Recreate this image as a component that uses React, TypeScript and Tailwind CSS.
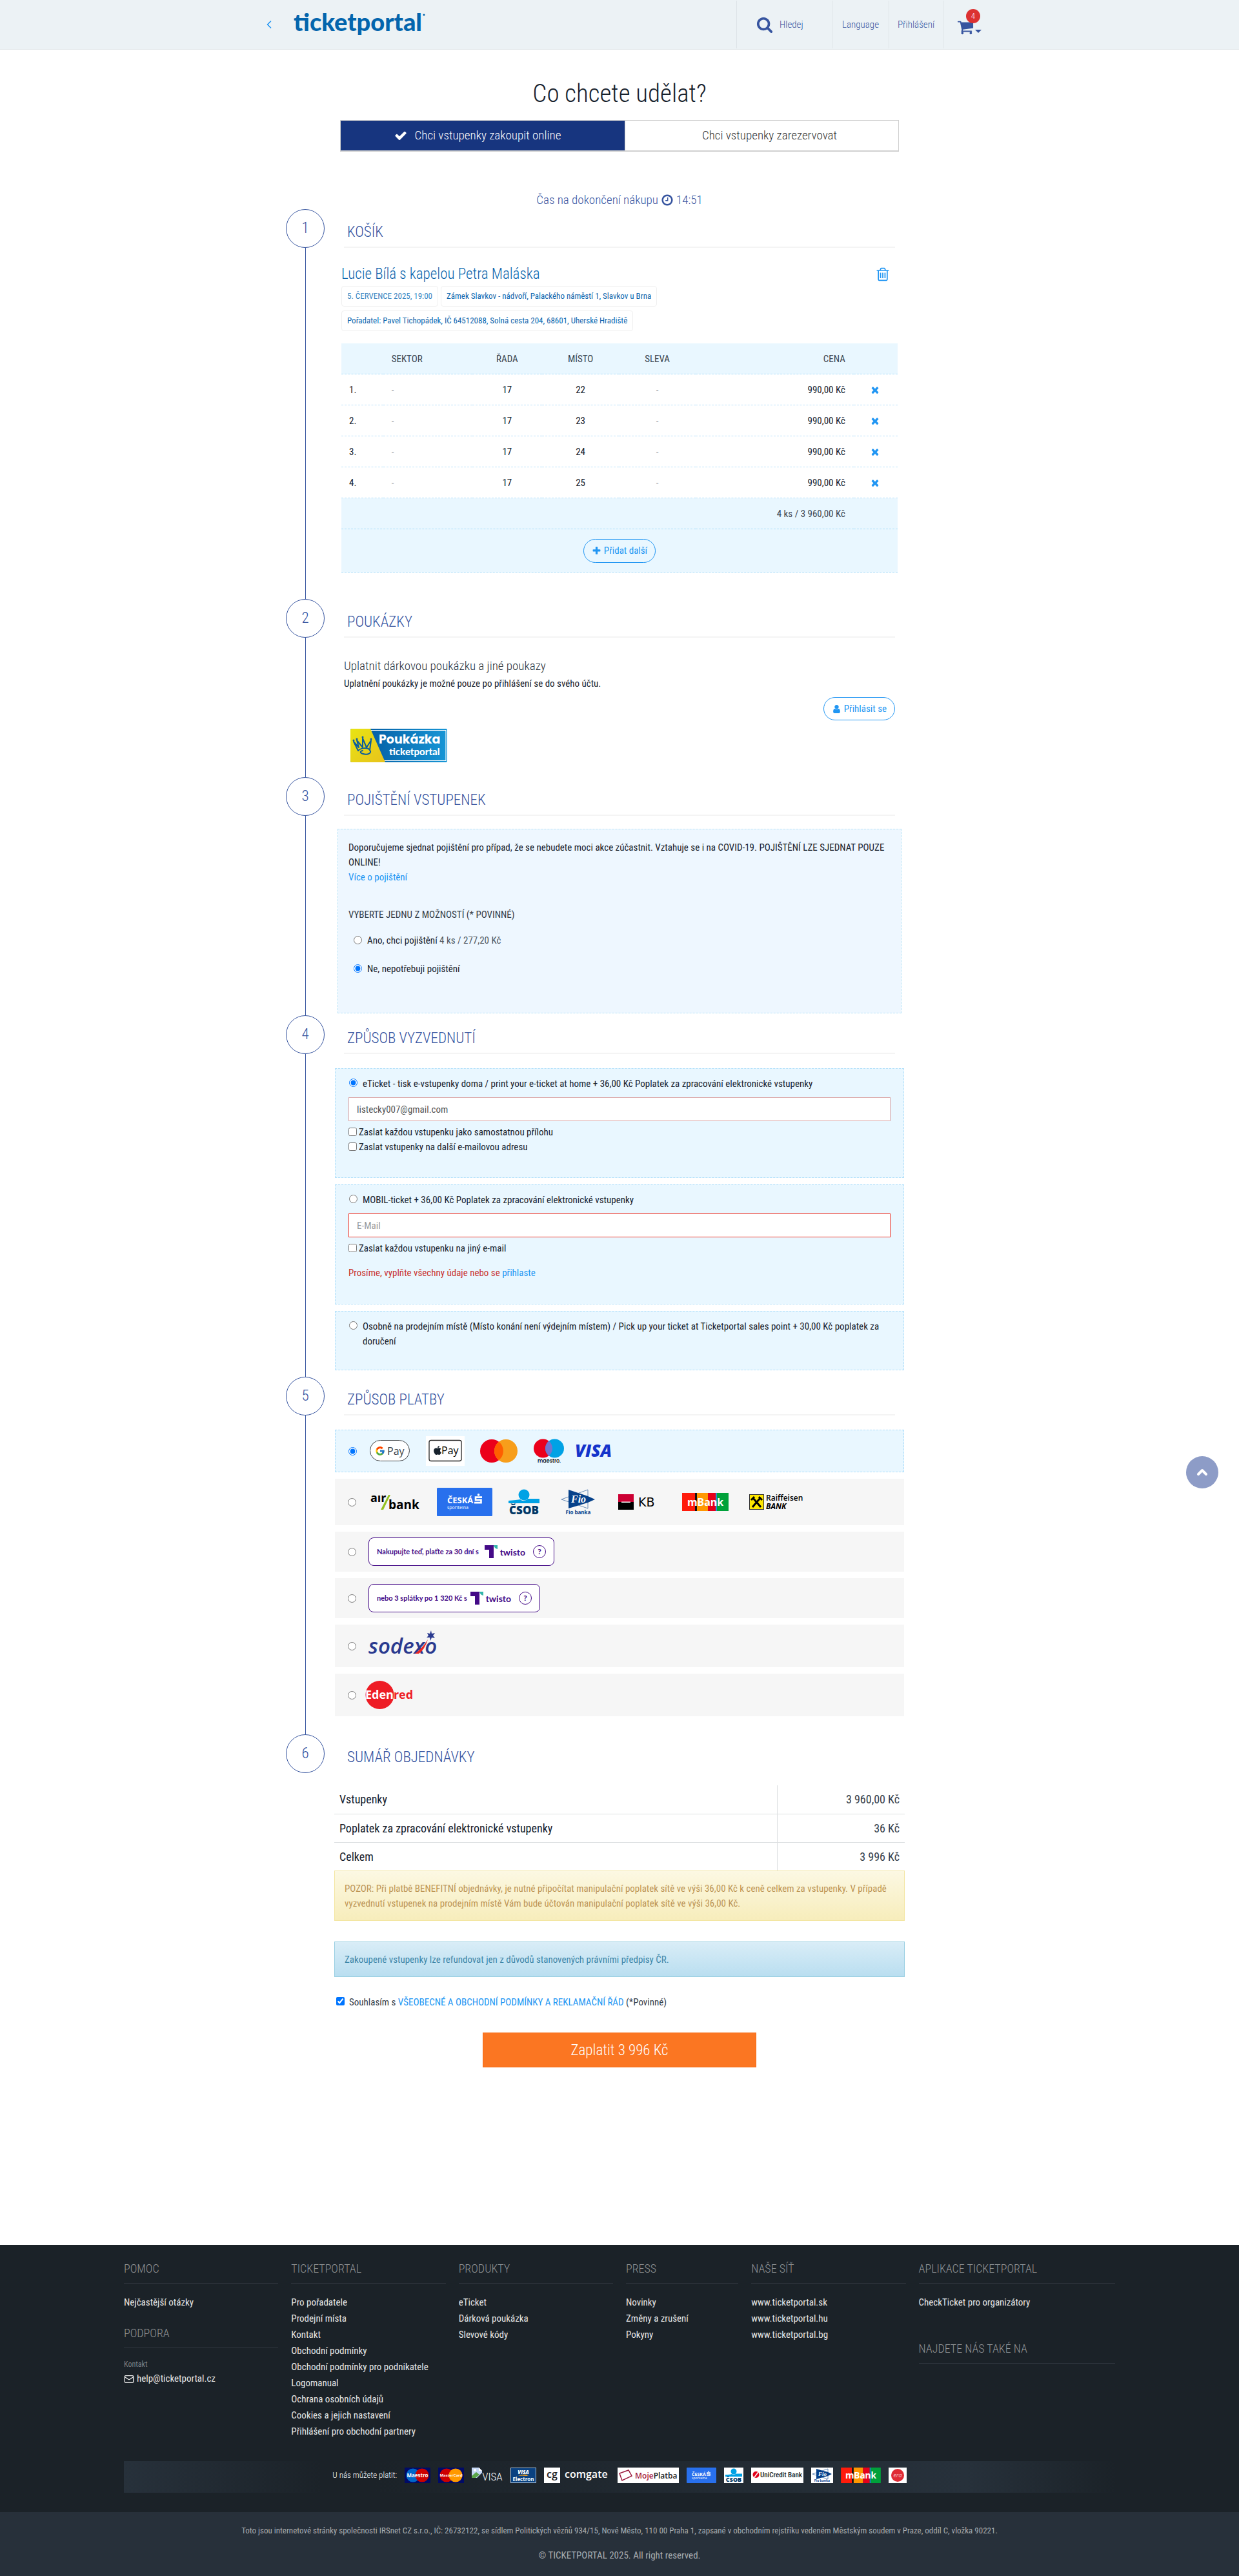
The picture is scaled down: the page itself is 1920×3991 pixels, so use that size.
import type { ReactNode } from "react";
import { FcGoogle } from "react-icons/fc";
import { FaApple } from "react-icons/fa";
import { ChevronLeft, ChevronUp, Mail } from "lucide-react";

const GLYPHS = {
  search:
    "M1216 832q0-185-131.5-316.5t-316.5-131.5-316.5 131.5-131.5 316.5 131.5 316.5 316.5 131.5 316.5-131.5 131.5-316.5zm512 832q0 52-38 90t-90 38q-54 0-90-38l-343-342q-179 124-399 124-143 0-273.5-55.5t-225-150-150-225-55.5-273.5 55.5-273.5 150-225 225-150 273.5-55.5 273.5 55.5 225 150 150 225 55.5 273.5q0 220-124 399l343 343q37 37 37 90z",
  check:
    "M1671 566q0 40-28 68l-724 724-136 136q-28 28-68 28t-68-28l-136-136-362-362q-28-28-28-68t28-68l136-136q28-28 68-28t68 28l294 295 656-657q28-28 68-28t68 28l136 136q28 28 28 68z",
  times:
    "M1490 1322q0 40-28 68l-136 136q-28 28-68 28t-68-28l-294-294-294 294q-28 28-68 28t-68-28l-136-136q-28-28-28-68t28-68l294-294-294-294q-28-28-28-68t28-68l136-136q28-28 68-28t68 28l294 294 294-294q28-28 68-28t68 28l136 136q28 28 28 68t-28 68l-294 294 294 294q28 28 28 68z",
  plus: "M1600 736v192q0 40-28 68t-68 28h-416v416q0 40-28 68t-68 28h-192q-40 0-68-28t-28-68v-416h-416q-40 0-68-28t-28-68v-192q0-40 28-68t68-28h416v-416q0-40 28-68t68-28h192q40 0 68 28t28 68v416h416q40 0 68 28t28 68z",
  cart: "M704 1536q0 52-38 90t-90 38-90-38-38-90 38-90 90-38 90 38 38 90zm896 0q0 52-38 90t-90 38-90-38-38-90 38-90 90-38 90 38 38 90zm128-1088v512q0 24-16.5 42.5t-40.5 21.5l-1044 122q13 60 13 70 0 16-24 64h920q26 0 45 19t19 45-19 45-45 19h-1024q-26 0-45-19t-19-45q0-11 8-31.5t16-36 21.5-40 15.5-29.5l-177-823h-204q-26 0-45-19t-19-45 19-45 45-19h256q16 0 28.5 6.5t19.5 15.5 13 24.5 8 26 5.5 29.5 4.5 26h1201q26 0 45 19t19 45z",
  clock:
    "M1024 544v448q0 14-9 23t-23 9h-320q-14 0-23-9t-9-23v-64q0-14 9-23t23-9h224v-352q0-14 9-23t23-9h64q14 0 23 9t9 23zm416 352q0-148-73-273t-198-198-273-73-273 73-198 198-73 273 73 273 198 198 273 73 273-73 198-198 73-273zm224 0q0 209-103 385.5t-279.5 279.5-385.5 103-385.5-103-279.5-279.5-103-385.5 103-385.5 279.5-279.5 385.5-103 385.5 103 279.5 279.5 103 385.5z",
  trash:
    "M704 736v576q0 14-9 23t-23 9h-64q-14 0-23-9t-9-23v-576q0-14 9-23t23-9h64q14 0 23 9t9 23zm256 0v576q0 14-9 23t-23 9h-64q-14 0-23-9t-9-23v-576q0-14 9-23t23-9h64q14 0 23 9t9 23zm256 0v576q0 14-9 23t-23 9h-64q-14 0-23-9t-9-23v-576q0-14 9-23t23-9h64q14 0 23 9t9 23zm128 724v-948h-896v948q0 22 7 40.5t14.5 27 10.5 8.5h832q3 0 10.5-8.5t14.5-27 7-40.5zm-672-1076h448l-48-117q-7-9-17-11h-317q-10 2-17 11zm928 32v64q0 14-9 23t-23 9h-96v948q0 83-47 143.5t-113 60.5h-832q-66 0-113-58.5t-47-141.5v-952h-96q-14 0-23-9t-9-23v-64q0-14 9-23t23-9h309l70-167q15-37 54-63t79-26h320q40 0 79 26t54 63l70 167h309q14 0 23 9t9 23z",
  user: "M1536 1399q0 109-62.5 187t-150.5 78h-854q-88 0-150.5-78t-62.5-187q0-85 8.5-160.5t31.5-152 58.5-131 94-89 134.5-34.5q131 128 313 128t313-128q76 0 134.5 34.5t94 89 58.5 131 31.5 152 8.5 160.5zm-256-887q0 159-112.5 271.5t-271.5 112.5-271.5-112.5-112.5-271.5 112.5-271.5 271.5-112.5 271.5 112.5 112.5 271.5z",
};

function Glyph({ name, className }: { name: keyof typeof GLYPHS; className: string }) {
  return (
    <svg viewBox="0 0 1792 1792" fill="currentColor" className={className} aria-hidden="true">
      <path d={GLYPHS[name]} />
    </svg>
  );
}

function Brand() {
  return (
    <svg viewBox="0 0 206 46" className="h-[46px] w-[206px]">
      <text x="0" y="33" className="fill-[#0365ad] font-['Lato'] text-[38px] font-black">
        ticketportal
      </text>
      <circle cx="202" cy="8" r="1.5" fill="#0365ad" />
    </svg>
  );
}

function Header() {
  return (
    <header className="border-b border-[#e2e7ea] bg-[#ecf2f5] text-[15px] text-[#36549f]">
      <div className="mx-auto flex h-[76px] max-w-[1122px] items-center">
        <a href="#zpet" aria-label="Zpět" className="ml-2 text-[#2196f3]">
          <ChevronLeft className="size-5" strokeWidth={2} />
        </a>
        <a href="#domu" aria-label="Ticketportal" className="ml-7">
          <Brand />
        </a>
        <nav className="ml-auto flex h-[74px] items-stretch">
          <button type="button" className="flex w-[148px] items-center gap-[10px] border-l border-[#dde3e7] pl-[30px]">
            <Glyph name="search" className="size-[26px]" />
            Hledej
          </button>
          <a href="#jazyk" className="flex w-[88px] items-center justify-center border-l border-[#dde3e7]">
            Language
          </a>
          <a href="#prihlaseni" className="flex w-[84px] items-center justify-center border-l border-[#dde3e7]">
            Přihlášení
          </a>
          <a href="#kosik" aria-label="Košík, 4 vstupenky" className="relative flex w-[60px] items-center gap-[2px] border-l border-[#dde3e7] pl-[21px]">
            <Glyph name="cart" className="mt-2 size-[26px]" />
            <span className="mt-5 border-x-[5px] border-t-[5px] border-x-transparent border-t-[#36549f]" />
            <span className="absolute top-[13px] left-[35px] flex size-[22px] items-center justify-center rounded-full bg-[#dc3131] text-[13px] text-white">
              4
            </span>
          </a>
        </nav>
      </div>
    </header>
  );
}

function Step({ n, title, ruled = true, last = false, children }: { n: number; title: string; ruled?: boolean; last?: boolean; children: ReactNode }) {
  return (
    <section className="flex gap-[15px]">
      <div className="flex w-[60px] shrink-0 flex-col items-center">
        <span className="flex size-[60px] shrink-0 items-center justify-center rounded-full border border-[#36549f] text-[23px] text-[#36549f]">
          {n}
        </span>
        {!last && <span className="w-px flex-1 bg-[#36549f]" />}
      </div>
      <div className="min-w-0 flex-1 pt-[22px]">
        <h2 className={`mx-[15px] px-[5px] text-[23px] leading-7 text-[#36549f] uppercase ${ruled ? "border-b-2 border-[#f4f4f4] pb-2" : ""}`}>
          {title}
        </h2>
        {children}
      </div>
    </section>
  );
}

const SEATS = ["22", "23", "24", "25"];
const TAG = "flex h-8 items-center rounded-sm border border-[#f0f0f0] px-2";

function Basket() {
  return (
    <Step n={1} title="Košík">
      <div className="mx-[11px] pb-[41px]">
        <div className="mt-[27px] flex items-center justify-between pr-[11px]">
          <h3 className="text-[23px] leading-7 text-[#0b66ae]">
            <a href="#akce">Lucie Bílá s kapelou Petra Maláska</a>
          </h3>
          <button type="button" aria-label="Vyprázdnit košík" className="text-[#2196f3]">
            <Glyph name="trash" className="size-6" />
          </button>
        </div>
        <div className="mt-1 flex gap-1 text-[13px] font-normal text-[#0b66ae]">
          <span className={`${TAG} text-[#3a86c2]`}>5. ČERVENCE 2025, 19:00</span>
          <span className={TAG}>Zámek Slavkov - nádvoří, Palackého náměstí 1, Slavkov u Brna</span>
        </div>
        <div className="mt-[6px] flex text-[13px] font-normal text-[#0b66ae]">
          <span className={TAG}>Pořadatel: Pavel Tichopádek, IČ 64512088, Solná cesta 204, 68601, Uherské Hradiště</span>
        </div>
        <table className="mt-[19px] w-full table-fixed border-separate border-spacing-0 text-center text-[15px] leading-5 text-[#17222d] [&_td]:border-b [&_td]:border-dashed [&_th]:border-b [&_th]:border-dashed">
          <colgroup>
            <col className="w-[7.5%]" />
            <col className="w-[16%]" />
            <col className="w-[12.6%]" />
            <col className="w-[13.8%]" />
            <col className="w-[13.8%]" />
            <col className="w-[28.4%]" />
            <col />
          </colgroup>
          <thead className="[&_th]:border-[#a9dcfa]">
            <tr className="h-12 bg-[#e9f7ff] text-[#3c4650]">
              <th aria-label="Pořadí" />
              <th className="pl-[13px] text-left font-normal">SEKTOR</th>
              <th className="font-normal">ŘADA</th>
              <th className="font-normal">MÍSTO</th>
              <th className="font-normal">SLEVA</th>
              <th className="pr-[13px] text-right font-normal">CENA</th>
              <th aria-label="Odebrat" />
            </tr>
          </thead>
          <tbody className="font-normal [&_td]:border-[#b8e1fa]">
            {SEATS.map((seat, i) => (
              <tr key={seat} className="h-12">
                <td className="pl-3 text-left">{i + 1}.</td>
                <td className="pl-[13px] text-left text-[#8a9096]">-</td>
                <td>17</td>
                <td>{seat}</td>
                <td className="text-[#8a9096]">-</td>
                <td className="pr-[13px] text-right">990,00 Kč</td>
                <td>
                  <button type="button" aria-label={`Odebrat místo ${seat}`} className="block pl-[25px] text-[#2196f3]">
                    <Glyph name="times" className="size-4" />
                  </button>
                </td>
              </tr>
            ))}
          </tbody>
          <tfoot className="bg-[#e9f7ff] font-normal text-[#3c4650] [&_td]:border-[#a9dcfa]">
            <tr className="h-12">
              <td colSpan={5} />
              <td className="pr-[13px] text-right">4 ks / 3 960,00 Kč</td>
              <td />
            </tr>
            <tr className="h-[67px]">
              <td colSpan={7}>
                <button type="button" className="inline-flex h-[37px] items-center gap-1 rounded-full border border-[#2196f3] px-3 text-[#2196f3]">
                  <Glyph name="plus" className="size-[15px]" />
                  Přidat další
                </button>
              </td>
            </tr>
          </tfoot>
        </table>
      </div>
    </Step>
  );
}

function VoucherLogo() {
  return (
    <svg viewBox="0 0 150 52" className="h-[52px] w-[150px]" role="img" aria-label="Poukázka ticketportal">
      <defs>
        <linearGradient id="voucherBlue" x1="0" x2="1">
          <stop offset="0.2" stopColor="#0560a6" />
          <stop offset="1" stopColor="#1796d6" />
        </linearGradient>
        <linearGradient id="voucherGold" x1="0" y1="0" x2="1" y2="1">
          <stop offset="0" stopColor="#e8e413" />
          <stop offset="1" stopColor="#e8c31c" />
        </linearGradient>
      </defs>
      <rect width="150" height="52" rx="2" fill="url(#voucherBlue)" />
      <path d="M30 2.500H148V49.500H52" fill="none" stroke="#fff" strokeWidth="1.2" />
      <path d="M2 0H31L54 52H2Q0 52 0 50V2Q0 0 2 0Z" fill="url(#voucherGold)" />
      <g fill="none" stroke="#0a5c9c" strokeWidth="2" strokeLinejoin="round" strokeLinecap="round">
        <path d="M5 20L12 34M5 20L13 29L10 18L19 29L19 15L25 29L32 18L30 33" />
        <path d="M12 34C17 29 27 29 30 33C34 38 26 41 20 39C15 38 14 35 19 34" />
      </g>
      <g fill="#0a5c9c">
        <circle cx="5" cy="18" r="1.5" />
        <circle cx="10" cy="16" r="1.5" />
        <circle cx="19" cy="13" r="1.5" />
        <circle cx="32" cy="16" r="1.5" />
      </g>
      <text x="44" y="23" className="fill-white font-['Poppins'] text-[19px] font-bold">Poukázka</text>
      <text x="60" y="41" className="fill-white font-['Lato'] text-[15px] font-black">ticketportal</text>
    </svg>
  );
}

function Vouchers() {
  return (
    <Step n={2} title="Poukázky">
      <div className="mx-[15px] pb-[23px] text-[#17222d]">
        <h3 className="mt-8 text-[19px] leading-6 text-[#26303a]">Uplatnit dárkovou poukázku a jiné poukazy</h3>
        <p className="mt-[5px] text-[15px] leading-5 font-normal">Uplatnění poukázky je možné pouze po přihlášení se do svého účtu.</p>
        <div className="mt-[11px] flex justify-end">
          <button type="button" className="flex h-9 items-center gap-1 rounded-full border border-[#2196f3] px-3 text-[15px] font-normal text-[#2196f3]">
            <Glyph name="user" className="size-[15px]" />
            Přihlásit se
          </button>
        </div>
        <div className="mt-[13px] ml-[10px]">
          <VoucherLogo />
        </div>
      </div>
    </Step>
  );
}

function Insurance() {
  return (
    <Step n={3} title="Pojištění vstupenek">
      <div className="pb-[3px]">
        <div className="mx-[5px] mt-5 border border-dashed border-[#b5e2f7] bg-[#eef7ff] px-4 pt-[17px] pb-14 text-[15px] leading-[23px] font-normal text-[#17222d]">
          <p>
            Doporučujeme sjednat pojištění pro případ, že se nebudete moci akce zúčastnit. Vztahuje se i na COVID-19. POJIŠTĚNÍ LZE
            SJEDNAT POUZE ONLINE!
          </p>
          <a href="#pojisteni" className="text-[#2196f3]">
            Více o pojištění
          </a>
          <p className="mt-[35px] text-[#36404a]">VYBERTE JEDNU Z MOŽNOSTÍ (* POVINNÉ)</p>
          <label className="mt-[17px] ml-2 flex gap-2">
            <input type="radio" name="insurance" className="mt-[4px] size-[13px]" />
            <span>
              Ano, chci pojištění <span className="text-[#4d565e]">4 ks / 277,20 Kč</span>
            </span>
          </label>
          <label className="mt-[21px] ml-2 flex gap-2">
            <input type="radio" name="insurance" defaultChecked className="mt-[4px] size-[13px]" />
            Ne, nepotřebuji pojištění
          </label>
        </div>
      </div>
    </Step>
  );
}

const DELIVERY_BOX = "mx-px border border-dashed border-[#b0dffa] bg-[#e9f7ff] px-5 pt-3";

function Delivery() {
  return (
    <Step n={4} title="Způsob vyzvednutí">
      <div className="pb-[10px] text-[15px] leading-[23px] font-normal text-[#17222d]">
        <div className={`${DELIVERY_BOX} mt-[22px] pb-[35px]`}>
          <label className="ml-px flex gap-2">
            <input type="radio" name="delivery" defaultChecked className="mt-[3px] size-[13px] shrink-0" />
            eTicket - tisk e-vstupenky doma / print your e-ticket at home + 36,00 Kč Poplatek za zpracování elektronické vstupenky
          </label>
          <input
            type="email"
            aria-label="E-mail pro eTicket"
            defaultValue="listecky007@gmail.com"
            className="mt-[9px] block h-[37px] w-full border border-[#dba5a5] bg-white px-3 text-[15px] text-[#555]"
          />
          <label className="mt-[6px] flex gap-[3px]">
            <input type="checkbox" className="mt-[4px] size-[13px]" />
            Zaslat každou vstupenku jako samostatnou přílohu
          </label>
          <label className="flex gap-[3px]">
            <input type="checkbox" className="mt-[4px] size-[13px]" />
            Zaslat vstupenky na další e-mailovou adresu
          </label>
        </div>
        <div className={`${DELIVERY_BOX} mt-[10px] pb-9`}>
          <label className="ml-px flex gap-2">
            <input type="radio" name="delivery" className="mt-[3px] size-[13px] shrink-0" />
            MOBIL-ticket + 36,00 Kč Poplatek za zpracování elektronické vstupenky
          </label>
          <input
            type="email"
            aria-label="E-mail pro MOBIL-ticket"
            placeholder="E-Mail"
            className="mt-[9px] block h-[37px] w-full border border-[#f2392b] bg-white px-3 text-[15px] placeholder:text-[#999]"
          />
          <label className="mt-[6px] flex gap-[3px]">
            <input type="checkbox" className="mt-[4px] size-[13px]" />
            Zaslat každou vstupenku na jiný e-mail
          </label>
          <p className="mt-[15px] text-[#c8322e]">
            Prosíme, vyplňte všechny údaje nebo se{" "}
            <a href="#prihlaseni" className="text-[#2196f3]">
              přihlaste
            </a>
          </p>
        </div>
        <div className={`${DELIVERY_BOX} mt-[10px] pb-8`}>
          <label className="ml-px flex gap-2">
            <input type="radio" name="delivery" className="mt-[3px] size-[13px] shrink-0" />
            Osobně na prodejním místě (Místo konání není výdejním místem) / Pick up your ticket at Ticketportal sales point + 30,00 Kč
            poplatek za doručení
          </label>
        </div>
      </div>
    </Step>
  );
}

function SavingsMark({ x, y, s }: { x: number; y: number; s: number }) {
  return (
    <svg x={x} y={y} width={s} height={s * 1.35} viewBox="0 0 12 16">
      <circle cx="6.5" cy="1.8" r="1.8" fill="#fff" />
      <path d="M12 5.500H2V9.800H10.500V14H0" fill="none" stroke="#fff" strokeWidth="2.6" />
    </svg>
  );
}

function CardLogos() {
  return (
    <>
      <svg viewBox="0 0 62 34" className="h-[34px] w-[62px]" role="img" aria-label="Google Pay">
        <rect x="0.5" y="0.5" width="61" height="32" rx="16" fill="#fff" stroke="#3c4043" />
        <FcGoogle x="8" y="9" width="16" height="16" />
        <text x="27" y="23" className="fill-[#3c4043] font-['Open_Sans'] text-[16px] font-normal">Pay</text>
      </svg>
      <svg viewBox="0 0 60 46" className="ml-[25px] h-[46px] w-[60px]" role="img" aria-label="Apple Pay">
        <rect width="60" height="46" fill="#fff" />
        <rect x="5" y="6.5" width="50" height="32" rx="3" fill="#fff" stroke="#222" strokeWidth="1.3" />
        <FaApple x="10" y="14" width="14" height="14" />
        <text x="24" y="28" className="fill-black font-['Open_Sans'] text-[16px] font-medium">Pay</text>
      </svg>
      <svg viewBox="0 0 60 38" className="ml-6 h-[38px] w-[60px]" role="img" aria-label="Mastercard">
        <circle cx="18" cy="19" r="18" fill="#eb001b" />
        <circle cx="40" cy="19" r="18" fill="#f79e1b" />
        <path d="M29 4.800a18 18 0 0 1 0 28.400a18 18 0 0 1 0-28.400z" fill="#ff5f00" />
      </svg>
      <svg viewBox="0 0 50 40" className="ml-[22px] h-10 w-[50px]" role="img" aria-label="Maestro">
        <circle cx="15.5" cy="16" r="14.5" fill="#eb001b" />
        <circle cx="33.5" cy="16" r="14.5" fill="#00a2e5" />
        <path d="M24.500 4.600a14.500 14.500 0 0 1 0 22.800a14.500 14.500 0 0 1 0-22.800z" fill="#7375cf" />
        <text x="25" y="38" textAnchor="middle" className="fill-black font-['Poppins'] text-[8px] font-medium">maestro.</text>
      </svg>
      <svg viewBox="0 0 60 26" className="ml-[14px] h-[26px] w-[60px]" role="img" aria-label="Visa">
        <text x="1" y="22" className="fill-[#1434cb] font-['Open_Sans'] text-[26px] font-extrabold italic">VISA</text>
      </svg>
    </>
  );
}

function MBankArt() {
  return (
    <>
      <rect width="20" height="28" fill="#ff1b0b" />
      <rect x="20" width="3" height="28" fill="#111" />
      <rect x="23" width="17" height="28" fill="#ff9700" />
      <rect x="40" width="12" height="28" fill="#e5001a" />
      <rect x="52" width="2" height="28" fill="#1d8fd6" />
      <rect x="54" width="18" height="28" fill="#00a13a" />
      <text x="36" y="20" textAnchor="middle" className="fill-white font-['Noto_Sans'] text-[16px] font-bold">mBank</text>
    </>
  );
}

function BankLogos() {
  return (
    <>
      <svg viewBox="0 0 80 28" className="ml-[2px] h-7 w-20" role="img" aria-label="Air Bank">
        <text x="0" y="14" className="fill-black font-['Open_Sans'] text-[18px] font-bold">aır</text>
        <path d="M28 3h3L20 26h-4z" fill="#95c11f" />
        <text x="28" y="25" className="fill-black font-['Open_Sans'] text-[19px] font-bold">bank</text>
      </svg>
      <svg viewBox="0 0 86 44" className="ml-[23px] h-11 w-[86px]" role="img" aria-label="Česká spořitelna">
        <rect width="86" height="44" rx="1.5" fill="#2870ed" />
        <text x="16" y="24" className="fill-white font-['Open_Sans'] text-[13px] font-bold">ČESKÁ</text>
        <text x="16" y="33" className="fill-white font-['Open_Sans'] text-[7px] font-normal">spořitelna</text>
        <SavingsMark x={58} y={9} s={12} />
      </svg>
      <svg viewBox="0 0 50 42" className="ml-6 h-[42px] w-[50px]" role="img" aria-label="ČSOB">
        <circle cx="25" cy="10" r="8.5" fill="#00a2e5" />
        <path d="M1 19Q14 18 19 17Q25 22 31 16L49 16V23H1z" fill="#00a2e5" />
        <text x="25" y="40" textAnchor="middle" className="fill-[#003665] font-['Open_Sans'] text-[17px] font-extrabold">ČSOB</text>
      </svg>
      <svg viewBox="0 0 56 42" className="ml-[31px] h-[42px] w-14" role="img" aria-label="Fio banka">
        <path d="M13 2L43 12V22L13 31z" fill="#06418a" />
        <path d="M2 17L43 2V31z" fill="none" stroke="#06418a" strokeWidth="0.6" />
        <path d="M43 12L54 17L43 22z" fill="#06418a" />
        <text x="17" y="22" className="fill-white font-['Liberation_Serif'] text-[16px] font-bold italic">Fio</text>
        <text x="28" y="40" textAnchor="middle" className="fill-[#06418a] font-['Open_Sans'] text-[8px] font-bold">Fio banka</text>
      </svg>
      <svg viewBox="0 0 70 24" className="ml-[34px] h-6 w-[70px]" role="img" aria-label="Komerční banka">
        <rect width="24" height="12" fill="#cc0033" />
        <rect y="12" width="24" height="12" />
        <rect x="5" y="11.5" width="14" height="1.5" fill="#fff" />
        <text x="31" y="19" className="fill-black font-['DejaVu_Sans'] text-[19px] font-normal">KB</text>
      </svg>
      <svg viewBox="0 0 72 28" className="ml-[29px] h-7 w-[72px]" role="img" aria-label="mBank">
        <MBankArt />
      </svg>
      <svg viewBox="0 0 90 24" className="ml-[32px] h-6 w-[90px]" role="img" aria-label="Raiffeisen Bank">
        <rect x="0.5" y="0.5" width="22" height="23" fill="#fee600" stroke="#333" />
        <path d="M5 20L17 6M18 20L6 6M3 9L8 4M20 9L15 4" stroke="#000" strokeWidth="3" />
        <text x="26" y="10" className="fill-black font-['Open_Sans'] text-[12px] font-semibold">Raiffeisen</text>
        <text x="26" y="23" className="fill-black font-['Open_Sans'] text-[12px] font-bold italic">BANK</text>
      </svg>
    </>
  );
}

function TwistoBadge({ text, width }: { text: string; width: string }) {
  return (
    <span className={`flex h-11 items-center rounded-lg border border-[#440a87] bg-white pl-3 font-['Lato'] font-bold text-[#440a87] ${width}`}>
      <span className="text-[11px] whitespace-nowrap">{text}</span>
      <svg viewBox="0 0 20 20" className="ml-auto size-5 shrink-0">
        <path d="M0 0H14V20H7V7H0z" fill="#440a87" />
        <path d="M14 0H20V6Q15 5 14 0z" fill="#33b5aa" />
      </svg>
      <span className="ml-1 text-[14px]">twisto</span>
      <span className="mr-3 ml-3 flex size-5 shrink-0 items-center justify-center rounded-full border border-[#440a87] text-[12px]">?</span>
    </span>
  );
}

function SodexoLogo() {
  return (
    <svg viewBox="0 0 110 40" className="h-10 w-[110px]" role="img" aria-label="Sodexo">
      <text x="0" y="37" className="fill-[#2a3a8f] font-['Open_Sans'] text-[33px] font-semibold italic">sodexo</text>
      <path d="M72 37Q84 28 92 15Q87 31 78 37z" fill="#ee2722" />
      <path d="M97 1L98 6L103 5L100 9L103 13L98 12L96 17L95 12L90 12L93 9L91 5L95 6z" fill="#2a3a8f" />
    </svg>
  );
}

function EdenredLogo() {
  return (
    <svg viewBox="0 0 76 46" className="h-[46px] w-[76px]" role="img" aria-label="Edenred">
      <circle cx="22.5" cy="23" r="22" fill="#ee1c25" />
      <text x="0" y="29" className="font-['Open_Sans'] text-[18px] font-bold">
        <tspan className="fill-white">Eden</tspan>
        <tspan className="fill-[#ee1c25]">red</tspan>
      </text>
    </svg>
  );
}

function PaymentOption({ label, box, checked = false, children }: { label: string; box: string; checked?: boolean; children: ReactNode }) {
  return (
    <label className={`mx-px flex items-center pl-5 ${box}`}>
      <input type="radio" name="payment" aria-label={label} defaultChecked={checked} className="size-[13px] shrink-0" />
      {children}
    </label>
  );
}

function Payment() {
  return (
    <Step n={5} title="Způsob platby">
      <div className="mt-[22px] flex flex-col gap-[10px] pb-7">
        <PaymentOption label="Platba kartou" box="h-[66px] border border-dashed border-[#a9dcfa] bg-[#e9f7ff]" checked>
          <span className="ml-5 flex items-center">
            <CardLogos />
          </span>
        </PaymentOption>
        <PaymentOption label="Bankovní převod" box="h-[72px] bg-[#f6f6f6]">
          <span className="ml-5 flex items-center">
            <BankLogos />
          </span>
        </PaymentOption>
        <PaymentOption label="Twisto za 30 dní" box="h-[62px] bg-[#f6f6f6]">
          <span className="ml-[19px]">
            <TwistoBadge text="Nakupujte teď, plaťte za 30 dní s" width="w-[288px]" />
          </span>
        </PaymentOption>
        <PaymentOption label="Twisto na 3 splátky" box="h-[62px] bg-[#f6f6f6]">
          <span className="ml-[19px]">
            <TwistoBadge text="nebo 3 splátky po 1 320 Kč s" width="w-[266px]" />
          </span>
        </PaymentOption>
        <PaymentOption label="Sodexo" box="h-[66px] bg-[#f6f6f6]">
          <span className="mb-[10px] ml-[19px]">
            <SodexoLogo />
          </span>
        </PaymentOption>
        <PaymentOption label="Edenred" box="h-[66px] bg-[#f6f6f6]">
          <span className="ml-[14px]">
            <EdenredLogo />
          </span>
        </PaymentOption>
      </div>
    </Step>
  );
}

const SUMMARY = [
  ["Vstupenky", "3 960,00 Kč"],
  ["Poplatek za zpracování elektronické vstupenky", "36 Kč"],
  ["Celkem", "3 996 Kč"],
];

function Summary() {
  return (
    <Step n={6} title="Sumář objednávky" ruled={false} last>
      <div className="pb-[275px] text-[15px] leading-[23px] font-normal text-[#17222d]">
        <table className="mt-[29px] w-full text-[18px]">
          <tbody>
            {SUMMARY.map(([name, price]) => (
              <tr key={name} className="h-11 border-b border-[#dcdfe1] last:border-b-0">
                <td className="border-r border-[#dcdfe1] px-2">{name}</td>
                <td className="w-[198px] px-2 text-right text-[#36404a]">{price}</td>
              </tr>
            ))}
          </tbody>
        </table>
        <p className="border border-[#f3e5a0] bg-linear-to-b from-[#fcf8e3] to-[#f7edbb] px-[15px] pt-4 pb-[14px] text-[#bd9555]">
          POZOR: Při platbě BENEFITNÍ objednávky, je nutné připočítat manipulační poplatek sítě ve výši 36,00 Kč k ceně celkem za vstupenky.
          V případě vyzvednutí vstupenek na prodejním místě Vám bude účtován manipulační poplatek sítě ve výši 36,00 Kč.
        </p>
        <p className="mt-8 border border-[#97cee2] bg-linear-to-b from-[#d9edf7] to-[#b9def0] px-[15px] pt-4 pb-[14px] text-[#3d86a8]">
          Zakoupené vstupenky lze refundovat jen z důvodů stanovených právními předpisy ČR.
        </p>
        <div className="mt-7 ml-[3px] flex gap-[7px] text-[#36404a]">
          <input id="terms" type="checkbox" defaultChecked className="mt-[3px] size-[13px]" />
          <label htmlFor="terms">
            Souhlasím s{" "}
            <a href="#podminky" className="text-[#2196f3]">
              VŠEOBECNÉ A OBCHODNÍ PODMÍNKY A REKLAMAČNÍ ŘÁD
            </a>{" "}
            (*Povinné)
          </label>
        </div>
        <button type="button" className="mx-auto mt-[35px] block h-[54px] w-full max-w-[424px] border border-[#f76a12] bg-[#fb7622] text-[23px] font-light text-white">
          Zaplatit 3 996 Kč
        </button>
      </div>
    </Step>
  );
}

function FooterGroup({ title, links = [], className = "" }: { title: string; links?: string[]; className?: string }) {
  return (
    <div className={className}>
      <h4 className="border-b border-[#30363f] pb-[10px] text-[18px] leading-6 font-light text-[#909396] uppercase">{title}</h4>
      {links.length > 0 && (
        <ul className="mt-[17px]">
          {links.map((link) => (
            <li key={link}>
              <a href="#odkaz">{link}</a>
            </li>
          ))}
        </ul>
      )}
    </div>
  );
}

function FooterPayments() {
  return (
    <div className="mt-[33px] bg-linear-to-r from-[#27313b] to-transparent to-20%">
      <div className="flex h-[49px] items-start justify-center gap-3 bg-linear-to-r from-transparent from-25% via-[#27313b] via-85% to-[#1b2228] pt-[10px] text-[13px] leading-6 font-light text-white">
        <span>U nás můžete platit:</span>
        <svg viewBox="0 0 40 24" className="h-6 w-10" role="img" aria-label="Maestro">
          <rect width="40" height="24" fill="#000a66" />
          <circle cx="13" cy="12" r="10.5" fill="#0066cb" />
          <circle cx="27" cy="12" r="10.5" fill="#cc0000" />
          <text x="20" y="15" textAnchor="middle" className="fill-white font-['Open_Sans'] text-[8px] font-bold">Maestro</text>
        </svg>
        <svg viewBox="0 0 40 24" className="h-6 w-10" role="img" aria-label="MasterCard">
          <rect width="40" height="24" fill="#000a66" />
          <circle cx="13" cy="12" r="10.5" fill="#cc0000" />
          <circle cx="27" cy="12" r="10.5" fill="#ff9900" />
          <text x="20" y="14" textAnchor="middle" className="fill-white font-['Open_Sans'] text-[6px] font-bold">MasterCard</text>
        </svg>
        <span className="flex">
          <svg viewBox="0 0 16 16" className="size-4">
            <path d="M0 0H11L16 5V16H0z" fill="#c6d8f5" />
            <path d="M11 0V5H16z" fill="#fff" />
            <path d="M0 16V13L7 7L12 11L6 16z" fill="#5aa549" />
            <circle cx="5" cy="4" r="2" fill="#fff" />
            <path d="M16 8V16H8z" fill="#1f272e" />
          </svg>
          <span className="text-[17px] leading-7">VISA</span>
        </span>
        <svg viewBox="0 0 40 24" className="h-6 w-10" role="img" aria-label="Visa Electron">
          <rect x="0.5" y="0.5" width="39" height="23" fill="#0a4180" stroke="#a9c0d8" />
          <text x="20" y="10" textAnchor="middle" className="fill-white font-['Open_Sans'] text-[8px] font-extrabold italic">VISA</text>
          <path d="M12 13Q20 9 28 12L25 13Q18 12 12 13z" fill="#f7a11a" />
          <text x="20" y="21" textAnchor="middle" className="fill-white font-['Open_Sans'] text-[8px] font-bold">Electron</text>
        </svg>
        <svg viewBox="0 0 102 24" className="h-6 w-[102px]" role="img" aria-label="Comgate">
          <rect width="25" height="24" fill="#fff" />
          <text x="12.5" y="16" textAnchor="middle" className="fill-[#222] font-['Open_Sans'] text-[16px] font-semibold">cg</text>
          <text x="32" y="16" className="fill-white font-['Open_Sans'] text-[16px] font-semibold">comgate</text>
        </svg>
        <svg viewBox="0 0 95 24" className="h-6 w-[95px]" role="img" aria-label="MojePlatba">
          <rect width="95" height="24" fill="#fff" />
          <path d="M3 9L17 4L22 13L7 20z" fill="none" stroke="#9c1d40" strokeWidth="1.5" />
          <text x="27" y="17" className="font-['Open_Sans'] text-[12px] font-semibold">
            <tspan className="fill-[#a51c44]">Moje</tspan>
            <tspan className="fill-[#222]">Platba</tspan>
          </text>
        </svg>
        <svg viewBox="0 0 46 24" className="h-6 w-[46px]" role="img" aria-label="Česká spořitelna">
          <rect width="46" height="24" rx="1" fill="#2870ed" />
          <text x="8" y="13" className="fill-white font-['Open_Sans'] text-[7px] font-bold">ČESKÁ</text>
          <text x="8" y="18" className="fill-white font-['Open_Sans'] text-[5px] font-normal">spořitelna</text>
          <SavingsMark x={31} y={5} s={6} />
        </svg>
        <svg viewBox="0 0 30 24" className="h-6 w-[30px]" role="img" aria-label="ČSOB">
          <rect width="30" height="24" fill="#fff" />
          <circle cx="15" cy="6" r="4.5" fill="#00a2e5" />
          <path d="M2 11Q10 11 12 10Q15 12 19 9.500L28 9.500V14H2z" fill="#00a2e5" />
          <text x="15" y="22" textAnchor="middle" className="fill-[#003665] font-['Open_Sans'] text-[9px] font-extrabold">ČSOB</text>
        </svg>
        <svg viewBox="0 0 81 24" className="h-6 w-[81px]" role="img" aria-label="UniCredit Bank">
          <rect width="81" height="24" fill="#fff" />
          <circle cx="7.5" cy="11" r="5" fill="#e2001a" />
          <path d="M5 15L11 7" stroke="#fff" strokeWidth="1.5" />
          <text x="14" y="15" className="fill-[#222] font-['Roboto_Condensed'] text-[11px] font-medium">UniCredit Bank</text>
        </svg>
        <svg viewBox="0 0 34 24" className="h-6 w-[34px]" role="img" aria-label="Fio banka">
          <rect width="34" height="24" fill="#fff" />
          <path d="M8 2L26 7V13L8 18z" fill="#06418a" />
          <path d="M2 10L26 2V18z" fill="none" stroke="#06418a" strokeWidth="0.6" />
          <path d="M26 7L32 10L26 13z" fill="#06418a" />
          <text x="11" y="13" className="fill-white font-['Liberation_Serif'] text-[9px] font-bold italic">Fio</text>
          <text x="17" y="22" textAnchor="middle" className="fill-[#06418a] font-['Open_Sans'] text-[5px] font-bold">Fio banka</text>
        </svg>
        <svg viewBox="0 0 72 28" className="h-6 w-[62px]" role="img" aria-label="mBank">
          <MBankArt />
        </svg>
        <svg viewBox="0 0 28 24" className="h-6 w-7" role="img" aria-label="Era">
          <rect width="28" height="24" fill="#fff" />
          <circle cx="14" cy="12" r="10" fill="#e02b35" />
          <text x="14" y="15" textAnchor="middle" className="fill-white font-['Open_Sans'] text-[9px] italic">era</text>
        </svg>
      </div>
    </div>
  );
}

function Footer() {
  return (
    <footer className="bg-[#1b2228] text-[15px] leading-[25px] font-normal text-[#e6e6e6]">
      <div className="mx-auto max-w-[1536px] pt-[25px] pb-[30px]">
        <div className="grid grid-cols-[239fr_239fr_239fr_174fr_239fr_304fr] gap-x-[20px]">
          <div>
            <FooterGroup title="Pomoc" links={["Nejčastější otázky"]} />
            <FooterGroup title="Podpora" className="mt-[23px]" />
            <p className="mt-[15px] text-[12px] leading-5 text-[#7d8083]">Kontakt</p>
            <a href="mailto:help@ticketportal.cz" className="flex items-center gap-1">
              <Mail className="size-4" strokeWidth={2} />
              help@ticketportal.cz
            </a>
          </div>
          <FooterGroup
            title="Ticketportal"
            links={[
              "Pro pořadatele",
              "Prodejní místa",
              "Kontakt",
              "Obchodní podmínky",
              "Obchodní podmínky pro podnikatele",
              "Logomanual",
              "Ochrana osobních údajů",
              "Cookies a jejich nastavení",
              "Přihlášení pro obchodní partnery",
            ]}
          />
          <FooterGroup title="Produkty" links={["eTicket", "Dárková poukázka", "Slevové kódy"]} />
          <FooterGroup title="Press" links={["Novinky", "Změny a zrušení", "Pokyny"]} />
          <FooterGroup title="Naše síť" links={["www.ticketportal.sk", "www.ticketportal.hu", "www.ticketportal.bg"]} />
          <div>
            <FooterGroup title="Aplikace Ticketportal" links={["CheckTicket pro organizátory"]} />
            <FooterGroup title="Najdete nás také na" className="mt-[47px]" />
          </div>
        </div>
        <FooterPayments />
      </div>
      <div className="bg-[#27303a] pt-[17px] pb-5 text-center leading-[23px] text-[#a9adb1]">
        <p className="text-[13px]">
          Toto jsou internetové stránky společnosti IRSnet CZ s.r.o., IČ: 26732122, se sídlem Politických vězňů 934/15, Nové Město, 110 00
          Praha 1, zapsané v obchodním rejstříku vedeném Městským soudem v Praze, oddíl C, vložka 90221.
        </p>
        <p className="mt-4">© TICKETPORTAL 2025. All right reserved.</p>
      </div>
    </footer>
  );
}

export default function App() {
  return (
    <div className="relative bg-white font-['Roboto_Condensed','Roboto',sans-serif] font-light text-[#17222d] [&_svg]:overflow-visible">
      <Header />
      <main>
        <h1 className="mt-11 text-center text-[39px] leading-[48px]">Co chcete udělat?</h1>
        <div className="mx-auto mt-[17px] grid h-[49px] max-w-[866px] grid-cols-[442fr_424fr] border border-b-2 border-[#d0d0d0] text-[19px]">
          <button type="button" className="flex items-center justify-center gap-3 border-r border-[#c8c8c8] bg-[#17357f] pr-4 text-white">
            <Glyph name="check" className="size-5" />
            Chci vstupenky zakoupit online
          </button>
          <button type="button" className="pl-6 text-[#333]">
            Chci vstupenky zarezervovat
          </button>
        </div>
        <p className="mt-[63px] flex items-center justify-center gap-1 text-[19px] leading-6 text-[#36549f]">
          Čas na dokončení nákupu
          <Glyph name="clock" className="size-5" />
          14:51
        </p>
        <div className="mx-auto mt-[2px] max-w-[1034px] pr-[75px]">
          <Basket />
          <Vouchers />
          <Insurance />
          <Delivery />
          <Payment />
          <Summary />
        </div>
      </main>
      <Footer />
      <a
        href="#nahoru"
        aria-label="Zpět nahoru"
        className="absolute top-[2256px] right-8 flex size-[50px] items-center justify-center rounded-full bg-[#8d9cc7] text-white"
      >
        <ChevronUp className="size-6" strokeWidth={4} />
      </a>
    </div>
  );
}
